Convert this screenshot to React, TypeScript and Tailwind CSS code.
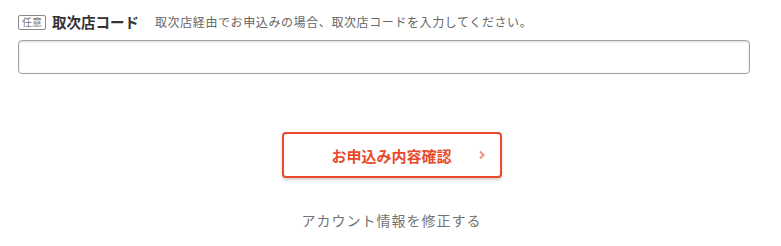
import React from "react";

export default function App() {
  const font = { fontFamily: '"Noto Sans CJK JP", "Noto Sans", sans-serif' };
  return (
    <div className="w-[781px] h-[246px] bg-white overflow-hidden" style={font}>
      <div className="pl-[18px] pr-[31px] pt-[14px]">
        <div className="flex items-center h-[16px]">
          <span className="inline-flex items-center justify-center h-[15px] px-[3px] border border-[#8a8a8a] rounded-[2px] text-[10px] leading-none text-[#777] mr-[6px]">
            任意
          </span>
          <span className="text-[14.5px] font-bold text-[#333] leading-none">取次店コード</span>
          <span className="ml-[16px] text-[12px] tracking-[0.05em] text-[#666] leading-none">
            取次店経由でお申込みの場合、取次店コードを入力してください。
          </span>
        </div>
        <input
          type="text"
          className="mt-[10px] block w-full h-[34px] border border-[#a0a0a0] rounded-[4px] bg-white shadow-[inset_0_1px_2px_rgba(0,0,0,0.15)] outline-none px-2"
        />
      </div>
      <div className="flex justify-center mt-[58px] pl-[2px]">
        <button className="relative w-[220px] h-[46px] border-2 border-[#e84a2b] rounded-[4px] bg-white shadow-[0_2px_3px_rgba(0,0,0,0.18)] flex items-center justify-center">
          <span className="text-[15px] font-bold text-[#e84a2b] leading-none">お申込み内容確認</span>
          <svg
            className="absolute right-[14px] top-1/2 -translate-y-1/2"
            width="8"
            height="10"
            viewBox="0 0 8 10"
          >
            <path d="M2 1.5 L5.5 5 L2 8.5" fill="none" stroke="#f0907c" strokeWidth="2" />
          </svg>
        </button>
      </div>
      <div className="flex justify-center mt-[35px] pl-[2px]">
        <span className="text-[14px] tracking-[0.07em] text-[#737373] leading-none">アカウント情報を修正する</span>
      </div>
    </div>
  );
}
